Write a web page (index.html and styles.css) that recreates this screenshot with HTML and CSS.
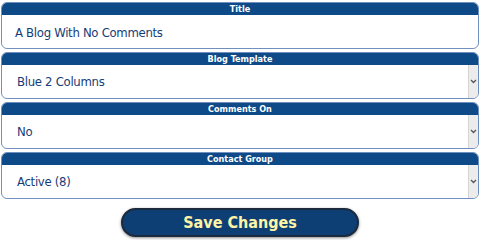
FILE: index.html
```html
<!DOCTYPE html>
<html>
<head>
<meta charset="utf-8">
<link rel="stylesheet" href="styles.css">
</head>
<body>
<form class="form">
  <div class="field">
    <div class="field-label">Title</div>
    <div class="field-body text">A Blog With No Comments</div>
  </div>
  <div class="field">
    <div class="field-label">Blog Template</div>
    <div class="field-body select"><span class="value">Blue 2 Columns</span><span class="arrow"><svg width="7" height="5" viewBox="0 0 7 5"><path d="M1 1 L3.5 3.5 L6 1" fill="none" stroke="#555" stroke-width="1.3"/></svg></span></div>
  </div>
  <div class="field">
    <div class="field-label">Comments On</div>
    <div class="field-body select"><span class="value">No</span><span class="arrow"><svg width="7" height="5" viewBox="0 0 7 5"><path d="M1 1 L3.5 3.5 L6 1" fill="none" stroke="#555" stroke-width="1.3"/></svg></span></div>
  </div>
  <div class="field">
    <div class="field-label">Contact Group</div>
    <div class="field-body select"><span class="value">Active (8)</span><span class="arrow"><svg width="7" height="5" viewBox="0 0 7 5"><path d="M1 1 L3.5 3.5 L6 1" fill="none" stroke="#555" stroke-width="1.3"/></svg></span></div>
  </div>
  <div class="actions">
    <button type="button" class="save">Save Changes</button>
  </div>
</form>
</body>
</html>
```
FILE: styles.css
```css
html, body {
  margin: 0;
  padding: 0;
  background: #ffffff;
}
body {
  width: 480px;
  height: 240px;
  overflow: hidden;
  font-family: "DejaVu Sans Condensed", "DejaVu Sans", sans-serif;
}
.form {
  padding: 2px 1px 0 1px;
}
.field {
  border: 1px solid #6f90be;
  border-radius: 6px;
  margin-bottom: 3px;
  background: #fff;
  overflow: hidden;
}
.field-label {
  background: #0e4a87;
  color: #ffffff;
  font-weight: bold;
  font-size: 9px;
  line-height: 12px;
  height: 12px;
  text-align: center;
  margin: -1px -1px 0 -1px;
  padding-top: 1px;
}
.field-body {
  height: 33px;
  box-sizing: border-box;
  display: flex;
  align-items: center;
  font-size: 13px;
  letter-spacing: -0.3px;
  color: #163c78;
}
.field-body.text {
  padding-left: 13px;
  padding-top: 2px;
}
.field-body.select {
  padding-left: 15px;
  justify-content: space-between;
}
.arrow {
  width: 9px;
  height: 100%;
  background: #ececec;
  border-left: 1px solid #d4d4d4;
  display: flex;
  align-items: center;
  justify-content: center;
}
.actions {
  display: flex;
  justify-content: center;
  padding-top: 6px;
}
.save {
  width: 238px;
  height: 29px;
  border-radius: 15px;
  background: #0d3f75;
  border: 2px solid #1b2a3d;
  box-shadow: 0 1px 3px rgba(0, 0, 0, 0.45);
  color: #fff4a6;
  font-family: "DejaVu Sans Condensed", "DejaVu Sans", sans-serif;
  font-weight: bold;
  font-size: 16px;
  padding: 0;
}
```
